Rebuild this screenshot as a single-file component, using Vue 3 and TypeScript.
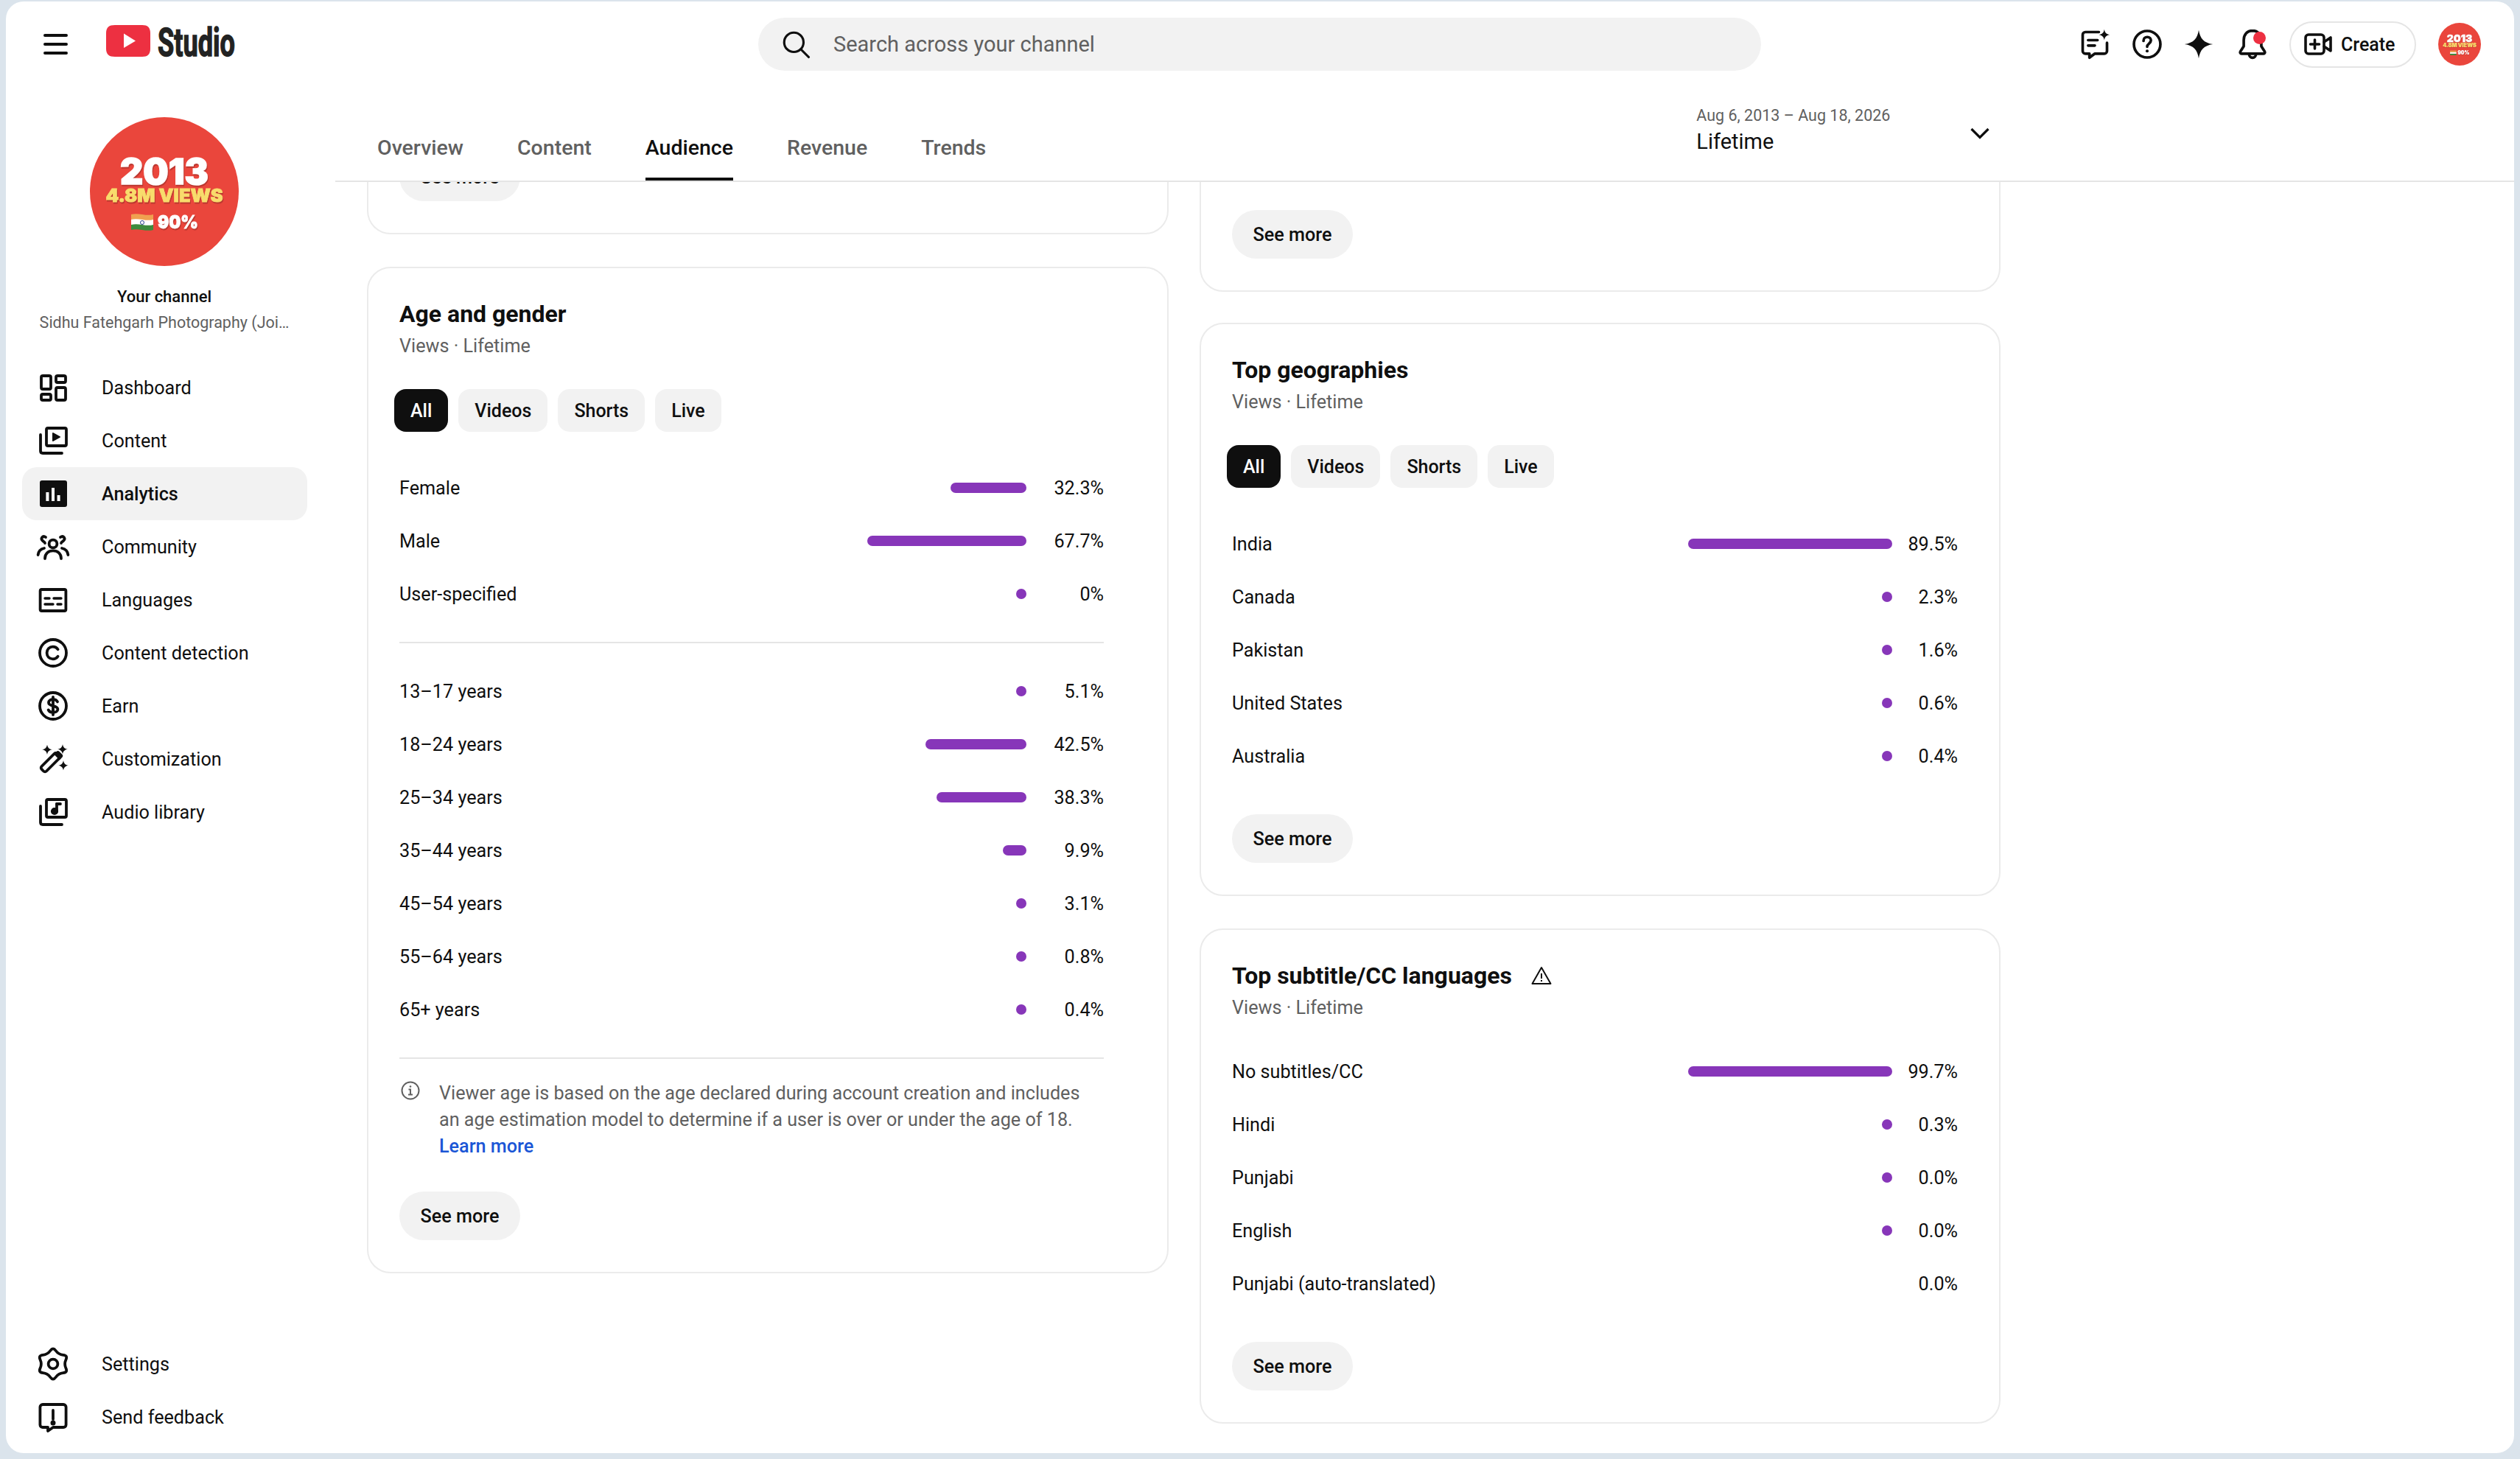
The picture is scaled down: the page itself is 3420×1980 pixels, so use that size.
<template>
  <div class="frame">
    <div class="panel">
      <header class="topbar">
        <svg class="menu" viewBox="0 0 33 28" fill="none" stroke="#0f0f0f" stroke-width="4" stroke-linecap="round">
          <path d="M2 2h29M2 14h29M2 26h29" />
        </svg>
        <svg class="logo" viewBox="0 0 240 64">
          <path d="M13 9h37c7 0 11 3 11 11v21c0 8-4 11-11 11H13C5 52 1 49 1 41V20c0-8 4-11 12-11z" fill="#ed3041" />
          <path d="M25 20.500 41 30.500 25 40z" fill="#fff" />
          <text x="71" y="51" class="wordmark" textLength="105" lengthAdjust="spacingAndGlyphs">Studio</text>
        </svg>
        <div class="search">
          <svg viewBox="0 0 24 24" class="search-icon" fill="none" stroke="#0f0f0f" stroke-width="1.800" stroke-linecap="round">
            <circle cx="10.500" cy="10.500" r="7.500" />
            <path d="m16 16 6 6" />
          </svg>
          <span>Search across your channel</span>
        </div>
        <div class="actions">
          <svg viewBox="0 0 24 24" class="action" fill="none" stroke="#0f0f0f" stroke-width="2" stroke-linecap="round" stroke-linejoin="round">
            <path d="M15 3H5a2 2 0 0 0-2 2v12a2 2 0 0 0 2 2h3v3l4-3h7a2 2 0 0 0 2-2v-6" />
            <path d="M7 9h7M7 13h5" />
            <path d="M19 1c.4 2.500 1.500 3.600 4 4-2.500.4-3.600 1.500-4 4-.4-2.500-1.500-3.600-4-4 2.500-.4 3.600-1.500 4-4z" fill="#0f0f0f" stroke="none" />
          </svg>
          <svg viewBox="0 0 24 24" class="action help" fill="none" stroke="#0f0f0f" stroke-width="2" stroke-linecap="round">
            <circle cx="12" cy="12" r="9.800" />
            <path d="M9.300 9.500c0-1.700 1.200-2.800 2.800-2.800s2.700 1 2.700 2.500c0 2.200-2.800 2.400-2.800 4.600" />
            <circle cx="12" cy="17" r="1.100" fill="#0f0f0f" stroke="none" />
          </svg>
          <svg viewBox="0 0 24 24" class="action star">
            <path d="M12 1c1 6.500 4 10 11 11-7 1-10 4.500-11 11-1-6.500-4-10-11-11 7-1 10-4.500 11-11z" fill="#0f0f0f" />
          </svg>
          <div class="bell">
            <svg viewBox="0 0 24 24" class="action" fill="none" stroke="#0f0f0f" stroke-width="2" stroke-linecap="round" stroke-linejoin="round">
              <path d="M12 2c-4 0-6.500 3-6.500 7v4.500L3 17.500c-.4.7 0 1.500.8 1.500h16.400c.8 0 1.200-.8.800-1.500l-2.500-4V9c0-4-2.500-7-6.500-7z" />
              <path d="M9.500 19.500a2.500 2.500 0 0 0 5 0" />
            </svg>
            <span class="dot"></span>
          </div>
          <button class="create">
            <svg viewBox="0 0 40 30" class="create-icon" fill="none" stroke="#0f0f0f" stroke-width="3.600" stroke-linecap="round" stroke-linejoin="round">
              <rect x="2" y="2" width="25" height="26" rx="4" />
              <path d="M14.500 9v12M8.500 15h12M27 12l9-6v18l-9-6" />
            </svg>
            Create
          </button>
          <svg viewBox="0 0 202 202" class="avatar-small">
            <circle cx="101" cy="101" r="101" fill="#ea463c" />
            <text x="101" y="91" text-anchor="middle" class="av av-year" textLength="120" lengthAdjust="spacingAndGlyphs">2013</text>
            <text x="101" y="115" text-anchor="middle" class="av av-views" textLength="159" lengthAdjust="spacingAndGlyphs">4.8M VIEWS</text>
            <rect x="56" y="131" width="30" height="8" fill="#f0a050" />
            <rect x="56" y="139" width="30" height="7" fill="#fff" />
            <rect x="56" y="146" width="30" height="7" fill="#3d8b3d" />
            <text x="92" y="151" class="av av-share" textLength="55" lengthAdjust="spacingAndGlyphs">90%</text>
          </svg>
        </div>
      </header>

      <div class="body">
        <aside class="sidebar">
          <svg viewBox="0 0 202 202" class="avatar">
            <circle cx="101" cy="101" r="101" fill="#ea463c" />
            <text x="101" y="91" text-anchor="middle" class="av av-year" textLength="120" lengthAdjust="spacingAndGlyphs">2013</text>
            <text x="101" y="115" text-anchor="middle" class="av av-views" textLength="159" lengthAdjust="spacingAndGlyphs">4.8M VIEWS</text>
            <path d="M56 132c10-3 20 3 30 0v8c-10 3-20-3-30 0z" fill="#f0a050" />
            <path d="M56 139c10-3 20 3 30 0v8c-10 3-20-3-30 0z" fill="#fff" />
            <path d="M56 146c10-3 20 3 30 0v7c-10 3-20-3-30 0z" fill="#3d8b3d" />
            <circle cx="71" cy="143" r="2.500" fill="none" stroke="#2a3f8f" />
            <text x="92" y="151" class="av av-share" textLength="55" lengthAdjust="spacingAndGlyphs">90%</text>
          </svg>
          <div class="channel-title">Your channel</div>
          <div class="channel-name">Sidhu Fatehgarh Photography (Joi…</div>

          <nav class="nav">
            <a v-for="item in navItems" :key="item.label" class="nav-item" :class="{ active: item.label === 'Analytics' }">
              <svg viewBox="0 0 24 24" class="nav-icon" fill="none" stroke="currentColor" stroke-width="1.900" stroke-linecap="round" stroke-linejoin="round" v-html="item.icon"></svg>
              {{ item.label }}
            </a>
          </nav>

          <nav class="nav bottom">
            <a v-for="item in bottomItems" :key="item.label" class="nav-item">
              <svg viewBox="0 0 24 24" class="nav-icon" fill="none" stroke="currentColor" stroke-width="1.900" stroke-linecap="round" stroke-linejoin="round" v-html="item.icon"></svg>
              {{ item.label }}
            </a>
          </nav>
        </aside>

        <main class="main">
          <div class="tabs">
            <a v-for="tab in tabs" :key="tab" class="tab" :class="{ current: tab === 'Audience' }">{{ tab }}</a>
            <div class="range">
              <div>
                <div class="range-dates">Aug 6, 2013 – Aug 18, 2026</div>
                <div class="range-label">Lifetime</div>
              </div>
              <svg viewBox="0 0 26 16" class="chevron" fill="none" stroke="#0f0f0f" stroke-width="3.200">
                <path d="m1.500 2 11.500 11.500L24.500 2" />
              </svg>
            </div>
          </div>

          <div class="columns">
            <div class="column">
              <section class="card stub left-stub">
                <button class="see-more">See more</button>
              </section>

              <section class="card age">
                <h2>Age and gender</h2>
                <div class="sub">Views · Lifetime</div>
                <div class="chips">
                  <span v-for="chip in chips" :key="chip" class="chip" :class="{ selected: chip === 'All' }">{{ chip }}</span>
                </div>
                <div class="rows">
                  <div v-for="row in genderRows" :key="row.label" class="row">
                    <span class="label">{{ row.label }}</span>
                    <span class="bar" :style="{ width: row.bar + 'px' }"></span>
                    <span class="pct">{{ row.value }}</span>
                  </div>
                </div>
                <hr class="rule" />
                <div class="rows">
                  <div v-for="row in ageRows" :key="row.label" class="row">
                    <span class="label">{{ row.label }}</span>
                    <span class="bar" :style="{ width: row.bar + 'px' }"></span>
                    <span class="pct">{{ row.value }}</span>
                  </div>
                </div>
                <hr class="rule" />
                <div class="note">
                  <svg viewBox="0 0 26 26" class="info" fill="none" stroke="#606060" stroke-width="2">
                    <circle cx="13" cy="13" r="11.500" />
                    <path d="M10.500 11.500H13v7M10 18.500h6" />
                    <circle cx="13" cy="7.500" r="1.300" fill="#606060" stroke="none" />
                  </svg>
                  <p>
                    Viewer age is based on the age declared during account creation and includes an age estimation model to determine if a user is over or under the age of 18.
                    <a class="learn">Learn more</a>
                  </p>
                </div>
                <button class="see-more">See more</button>
              </section>
            </div>

            <div class="column">
              <section class="card stub right-stub">
                <button class="see-more">See more</button>
              </section>

              <section class="card">
                <h2>Top geographies</h2>
                <div class="sub">Views · Lifetime</div>
                <div class="chips">
                  <span v-for="chip in chips" :key="chip" class="chip" :class="{ selected: chip === 'All' }">{{ chip }}</span>
                </div>
                <div class="rows">
                  <div v-for="row in geoRows" :key="row.label" class="row">
                    <span class="label">{{ row.label }}</span>
                    <span class="bar" :style="{ width: row.bar + 'px' }"></span>
                    <span class="pct">{{ row.value }}</span>
                  </div>
                </div>
                <button class="see-more">See more</button>
              </section>

              <section class="card">
                <h2 class="with-icon">
                  Top subtitle/CC languages
                  <svg viewBox="0 0 28 26" class="warn" fill="none" stroke="#0f0f0f" stroke-width="2" stroke-linejoin="round">
                    <path d="M14 2 26.500 24h-25z" />
                    <path d="M14 10v7M14 19v2" />
                  </svg>
                </h2>
                <div class="sub">Views · Lifetime</div>
                <div class="rows no-chips">
                  <div v-for="row in subtitleRows" :key="row.label" class="row">
                    <span class="label">{{ row.label }}</span>
                    <span class="bar" :style="{ width: row.bar + 'px' }"></span>
                    <span class="pct">{{ row.value }}</span>
                  </div>
                </div>
                <button class="see-more">See more</button>
              </section>
            </div>
          </div>
        </main>
      </div>
    </div>
  </div>
</template>

<script setup lang="ts">
interface NavItem {
  label: string;
  icon: string;
}

interface StatRow {
  label: string;
  value: string;
  bar: number;
}

// six rounded lobes for the settings cog
const gearPath = (() => {
  const pts: [number, number][] = [];
  for (let i = 0; i < 12; i++) {
    const r = i % 2 === 0 ? 11.6 : 7.4;
    const a = (Math.PI / 6) * i - Math.PI / 2;
    pts.push([12 + r * Math.cos(a), 12 + r * Math.sin(a)]);
  }
  const mid = (a: [number, number], b: [number, number]) => `${(a[0] + b[0]) / 2} ${(a[1] + b[1]) / 2}`;
  let d = `M${mid(pts[11], pts[0])}`;
  pts.forEach((p, i) => {
    d += `Q${p[0]} ${p[1]} ${mid(p, pts[(i + 1) % 12])}`;
  });
  return d + 'z';
})();

const navItems: NavItem[] = [
  {
    label: 'Dashboard',
    icon: '<rect x="4" y="4" width="6.500" height="9" rx="1"/><rect x="14" y="4" width="6.500" height="4.500" rx="1"/><rect x="4" y="16.500" width="6.500" height="4" rx="1"/><rect x="14" y="12" width="6.500" height="8.500" rx="1"/>',
  },
  {
    label: 'Content',
    icon: '<rect x="7.500" y="3.500" width="13.500" height="12" rx="1"/><path d="M3.500 8v11c0 .8.500 1.500 1.500 1.500h13"/><path d="M12 7l4.500 2.500L12 12z" fill="currentColor" stroke-width="1"/>',
  },
  {
    label: 'Analytics',
    icon: '<rect x="3" y="3" width="18.500" height="18" rx="1.500" fill="currentColor" stroke="none"/><path d="M8.200 11v6M12 8v9M15.800 13v4" stroke="#fff" stroke-width="2" stroke-linecap="butt"/>',
  },
  {
    label: 'Community',
    icon: '<circle cx="12" cy="10" r="2.700"/><path d="M6.500 20c0-3.300 2.400-5.300 5.500-5.300s5.500 2 5.500 5.300"/><path d="M7 5.500c-2-1.500-3.800 1-2 2.500 1 .7 1.500 1 1.500 1.500"/><path d="M17 5.500c2-1.500 3.800 1 2 2.500-1 .7-1.500 1-1.500 1.500"/><path d="M1.800 17.500c.3-2.500 1.800-4 4.200-4.500M22.200 17.500c-.3-2.500-1.800-4-4.200-4.500"/>',
  },
  {
    label: 'Languages',
    icon: '<rect x="3.300" y="5" width="17.400" height="14.500" rx="1"/><path d="M6.500 11h3M12.500 11h5M6.500 15h5.500M15 15h2.500" stroke-width="1.700"/>',
  },
  {
    label: 'Content detection',
    icon: '<circle cx="12" cy="12" r="9"/><path d="M15.300 9.600c-.8-1.200-2-1.800-3.400-1.800-2.400 0-4.100 1.800-4.100 4.200s1.700 4.200 4.100 4.200c1.400 0 2.600-.6 3.400-1.800"/>',
  },
  {
    label: 'Earn',
    icon: '<circle cx="12" cy="12" r="9"/><path d="M15 9.200c-.5-1-1.600-1.600-3-1.600-1.700 0-3 .8-3 2.200 0 3 6.200 1.500 6.200 4.400 0 1.400-1.400 2.200-3.200 2.200-1.500 0-2.700-.6-3.200-1.700M12 6v12"/>',
  },
  {
    label: 'Customization',
    icon: '<rect x="2.700" y="12" width="15" height="4.600" rx="1.400" transform="rotate(-45 10.200 14.300)"/><path d="M12.500 8.800l3.900 3.900 1.800-1.800c.6-.6.600-1.400 0-2l-1.900-1.900c-.6-.6-1.400-.6-2 0z" fill="currentColor" stroke="none"/><path d="M8 2.200c.4 2.100 1.300 3 3.400 3.400-2.100.4-3 1.300-3.400 3.400-.4-2.100-1.300-3-3.400-3.400 2.100-.4 3-1.300 3.400-3.400zM18.500 2c.4 2.100 1.300 3 3.400 3.400-2.100.4-3 1.300-3.400 3.400-.4-2.100-1.300-3-3.400-3.400 2.100-.4 3-1.300 3.400-3.400zM19 13c.4 2.100 1.300 3 3.400 3.400-2.100.4-3 1.300-3.400 3.400-.4-2.100-1.300-3-3.400-3.400 2.100-.4 3-1.300 3.400-3.400z" fill="currentColor" stroke="none"/>',
  },
  {
    label: 'Audio library',
    icon: '<rect x="7.500" y="3.500" width="13.500" height="12" rx="1"/><path d="M3.500 8v11c0 .8.500 1.500 1.500 1.500h13"/><path d="M14.500 6.500v5"/><circle cx="13" cy="11.500" r="1.600" fill="currentColor"/><path d="M14.500 6.500h2.500"/>',
  },
];

const bottomItems: NavItem[] = [
  { label: 'Settings', icon: `<path d="${gearPath}"/><circle cx="12" cy="12" r="3.200"/>` },
  {
    label: 'Send feedback',
    icon: '<path d="M5 3.500h14c1 0 1.800.8 1.800 1.800v12c0 1-.8 1.700-1.800 1.700h-7l-3.500 2.500V19H5c-1 0-1.800-.7-1.800-1.700v-12c0-1 .8-1.800 1.800-1.800z"/><path d="M12 7.500v6"/><circle cx="12" cy="16" r=".8" fill="currentColor"/>',
  },
];

const tabs = ['Overview', 'Content', 'Audience', 'Revenue', 'Trends'];
const chips = ['All', 'Videos', 'Shorts', 'Live'];

const genderRows: StatRow[] = [
  { label: 'Female', value: '32.3%', bar: 103 },
  { label: 'Male', value: '67.7%', bar: 216 },
  { label: 'User-specified', value: '0%', bar: 14 },
];

const ageRows: StatRow[] = [
  { label: '13–17 years', value: '5.1%', bar: 14 },
  { label: '18–24 years', value: '42.5%', bar: 137 },
  { label: '25–34 years', value: '38.3%', bar: 122 },
  { label: '35–44 years', value: '9.9%', bar: 32 },
  { label: '45–54 years', value: '3.1%', bar: 14 },
  { label: '55–64 years', value: '0.8%', bar: 14 },
  { label: '65+ years', value: '0.4%', bar: 14 },
];

const geoRows: StatRow[] = [
  { label: 'India', value: '89.5%', bar: 277 },
  { label: 'Canada', value: '2.3%', bar: 14 },
  { label: 'Pakistan', value: '1.6%', bar: 14 },
  { label: 'United States', value: '0.6%', bar: 14 },
  { label: 'Australia', value: '0.4%', bar: 14 },
];

const subtitleRows: StatRow[] = [
  { label: 'No subtitles/CC', value: '99.7%', bar: 277 },
  { label: 'Hindi', value: '0.3%', bar: 14 },
  { label: 'Punjabi', value: '0.0%', bar: 14 },
  { label: 'English', value: '0.0%', bar: 14 },
  { label: 'Punjabi (auto-translated)', value: '0.0%', bar: 0 },
];
</script>

<style scoped>
.frame {
  box-sizing: border-box;
  width: 3420px;
  height: 1980px;
  padding: 2px 8px 8px;
  background: #dbe4ec;
  font-family: Roboto, "Liberation Sans", sans-serif;
  color: #0f0f0f;
}

.panel {
  height: 100%;
  display: flex;
  flex-direction: column;
  background: #fff;
  border-radius: 24px;
  overflow: hidden;
}

.topbar {
  flex: none;
  height: 116px;
  display: flex;
  align-items: center;
  padding-left: 51px;
}

.menu {
  width: 33px;
  height: 28px;
}

.logo {
  width: 240px;
  height: 64px;
  margin: -6px 0 0 51px;
}

.wordmark {
  font-family: Roboto, "Liberation Sans", sans-serif;
  font-size: 54px;
  font-weight: 700;
  fill: #222;
  stroke: #222;
  stroke-width: 1.400px;
}

.search {
  width: 1361px;
  height: 72px;
  margin: 0 0 0 646px;
  padding-left: 30px;
  box-sizing: border-box;
  display: flex;
  align-items: center;
  gap: 30px;
  background: #f2f2f2;
  border-radius: 36px;
  font-size: 29px;
  color: #606060;
}

.search-icon {
  width: 42px;
  height: 42px;
}

.actions {
  display: flex;
  align-items: center;
  margin-left: 431px;
}

.action {
  width: 44px;
  height: 44px;
  display: block;
}

.help {
  margin-left: 27px;
}

.star {
  margin-left: 27px;
  width: 42px;
  height: 42px;
}

.bell {
  position: relative;
  margin-left: 30px;
}

.dot {
  position: absolute;
  top: 5px;
  right: 4px;
  width: 17px;
  height: 17px;
  border-radius: 50%;
  background: #ed3041;
}

.create {
  width: 172px;
  height: 63px;
  margin-left: 28px;
  padding: 0 0 0 18px;
  display: flex;
  align-items: center;
  gap: 10px;
  background: #fff;
  border: 2px solid #e5e5e5;
  border-radius: 32px;
  font-family: inherit;
  font-size: 25px;
  font-weight: 500;
  color: #0f0f0f;
}

.create-icon {
  width: 40px;
  height: 30px;
}

.avatar-small {
  width: 58px;
  height: 58px;
  margin-left: 30px;
}

.av {
  font-family: Inter, "Liberation Sans", sans-serif;
  font-weight: 900;
  paint-order: stroke;
  filter: drop-shadow(1px 2px 0 rgba(0, 0, 0, 0.2));
}

.av-year {
  font-size: 48px;
  fill: #fff;
  stroke: #fff;
  stroke-width: 1.500px;
}

.av-views {
  font-size: 24px;
  fill: #f8dc6c;
  stroke: #f8dc6c;
  stroke-width: 0.800px;
}

.av-share {
  font-size: 25px;
  fill: #fff;
  stroke: #fff;
  stroke-width: 0.800px;
}

.body {
  flex: 1;
  min-height: 0;
  display: flex;
}

.sidebar {
  flex: none;
  width: 447px;
  box-sizing: border-box;
  padding: 41px 17px 13px 0;
  display: flex;
  flex-direction: column;
  align-items: center;
}

.avatar {
  width: 202px;
  height: 202px;
}

.channel-title {
  margin-top: 27px;
  font-size: 22px;
  line-height: 30px;
  font-weight: 500;
}

.channel-name {
  margin-top: 4px;
  font-size: 21.500px;
  line-height: 32px;
  color: #606060;
  white-space: nowrap;
}

.nav {
  align-self: stretch;
  margin: 36px 21px 0 22px;
  display: flex;
  flex-direction: column;
}

.nav.bottom {
  margin-top: auto;
}

.nav-item {
  height: 72px;
  padding-left: 18px;
  display: flex;
  align-items: center;
  gap: 42px;
  font-size: 25.200px;
  border-radius: 20px;
}

.nav-item.active {
  background: #f2f2f2;
  font-weight: 500;
}

.nav-icon {
  width: 48px;
  height: 48px;
  flex: none;
}

.main {
  flex: 1;
  min-width: 0;
  position: relative;
  overflow: hidden;
}

.tabs {
  position: absolute;
  top: 0;
  left: 0;
  right: 0;
  z-index: 2;
  box-sizing: border-box;
  height: 129px;
  padding-left: 57px;
  display: flex;
  gap: 73px;
  background: #fff;
  border-bottom: 2px solid #e5e5e5;
}

.tab {
  box-sizing: border-box;
  height: 127px;
  padding-top: 65px;
  font-size: 28.500px;
  line-height: 36px;
  font-weight: 500;
  color: #606060;
}

.tab.current {
  color: #0f0f0f;
  border-bottom: 4px solid #0f0f0f;
}

.range {
  margin-left: 891px;
  padding-top: 24px;
  width: 412px;
  display: flex;
  align-items: center;
  justify-content: space-between;
  align-self: flex-start;
}

.range-dates {
  font-size: 21.500px;
  line-height: 30px;
  color: #606060;
}

.range-label {
  font-size: 29px;
  line-height: 40px;
}

.chevron {
  width: 26px;
  height: 16px;
  margin: 8px 14px 0 0;
}

.columns {
  padding-left: 43px;
  display: grid;
  grid-template-columns: 1088px 1087px;
  gap: 42px;
}

.column {
  display: flex;
  flex-direction: column;
  gap: 44px;
}

.card {
  box-sizing: border-box;
  padding: 42px 56px 43px 42px;
  border: 2px solid #ebebeb;
  border-radius: 32px;
  display: flex;
  flex-direction: column;
  align-items: stretch;
}

.card.age {
  padding-right: 86px;
}

.stub {
  justify-content: flex-end;
  padding-bottom: 43px;
}

.left-stub {
  height: 200px;
}

.right-stub {
  height: 278px;
  margin-bottom: -2px;
}

h2 {
  margin: 0;
  font-size: 32px;
  line-height: 40px;
  font-weight: 700;
}

.with-icon {
  display: flex;
  align-items: center;
  gap: 26px;
}

.warn {
  width: 28px;
  height: 26px;
}

.sub {
  margin-top: 6px;
  font-size: 25.200px;
  line-height: 36px;
  color: #606060;
}

.chips {
  margin: 40px 0 40px -7px;
  display: flex;
  gap: 14px;
}

.chip {
  height: 58px;
  padding: 0 22px;
  display: flex;
  align-items: center;
  background: #f2f2f2;
  border-radius: 16px;
  font-size: 25px;
  font-weight: 500;
}

.chip.selected {
  background: #0f0f0f;
  color: #fff;
}

.no-chips {
  margin-top: 32px;
}

.row {
  height: 72px;
  display: flex;
  align-items: center;
  font-size: 25.200px;
}

.label {
  flex: 1;
}

.bar {
  height: 14px;
  background: #8736b9;
  border-radius: 7px;
}

.pct {
  width: 89px;
  text-align: right;
}

.age .pct {
  width: 105px;
}

.rule {
  margin: 29px 0;
  border: 0;
  border-top: 2px solid #e5e5e5;
}

.note {
  display: flex;
  gap: 26px;
}

.info {
  flex: none;
  width: 26px;
  height: 26px;
  margin-left: 2px;
  margin-top: 1px;
}

.note p {
  margin: 0;
  max-width: 880px;
  font-size: 25.200px;
  line-height: 36px;
  color: #606060;
}

.learn {
  display: block;
  color: #1a56d6;
  font-weight: 500;
}

.see-more {
  align-self: flex-start;
  margin-top: 43px;
  height: 66px;
  width: 164px;
  padding: 0;
  background: #f2f2f2;
  border: 0;
  border-radius: 33px;
  font-family: inherit;
  font-size: 25.200px;
  font-weight: 500;
  color: #0f0f0f;
}

.stub .see-more {
  margin-top: 0;
}
</style>
